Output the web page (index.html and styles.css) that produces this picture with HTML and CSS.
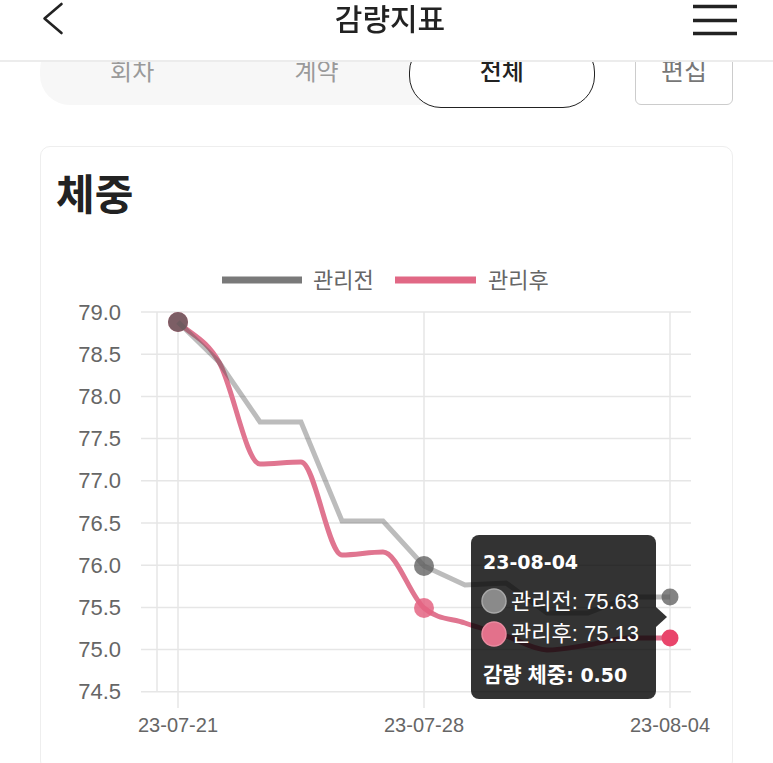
FILE: index.html
```html
<!DOCTYPE html>
<html lang="ko">
<head>
    <meta charset="UTF-8">
    <meta name="viewport" content="width=device-width, initial-scale=1.0">
    <title>감량지표</title>
    <link rel="stylesheet" href="styles.css">
</head>
<body>
    <header class="top-bar">
        <a class="back-btn" href="#">
            <svg width="30" height="40" viewBox="40 0 30 40">
                <polyline points="61.5,4 44.5,18.5 61.5,33" fill="none" stroke="#222" stroke-width="2.6" stroke-linecap="round" stroke-linejoin="round"/>
            </svg>
        </a>
        <h1 class="page-title">감량지표</h1>
        <a class="menu-btn" href="#">
            <svg width="50" height="40" viewBox="690 0 50 40">
                <line x1="693" y1="6.5" x2="737" y2="6.5" stroke="#222" stroke-width="3.4"/>
                <line x1="693" y1="20.5" x2="737" y2="20.5" stroke="#222" stroke-width="3.4"/>
                <line x1="693" y1="33.5" x2="737" y2="33.5" stroke="#222" stroke-width="3.4"/>
            </svg>
        </a>
    </header>

    <main class="content">
        <div class="tab-row">
            <div class="tabs">
                <button class="tab">회차</button>
                <button class="tab">계약</button>
                <button class="tab active">전체</button>
            </div>
            <button class="edit-btn">편집</button>
        </div>

        <section class="card">
            <h2 class="card-title">체중</h2>
            <svg class="chart" width="691" height="520" viewBox="41 250 691 520">
                <!-- legend -->
                <rect x="222" y="276.5" width="80" height="7" fill="rgba(88,88,88,0.8)"/>
                <text class="legend" x="313" y="288">관리전</text>
                <rect x="395" y="276.5" width="81" height="7" fill="rgba(222,88,120,0.9)"/>
                <text class="legend" x="488" y="288">관리후</text>

                <!-- grid -->
                <g stroke="#e6e6e6" stroke-width="1.5">
                    <line x1="141" y1="312" x2="691" y2="312"/>
                    <line x1="141" y1="354.2" x2="691" y2="354.2"/>
                    <line x1="141" y1="396.4" x2="691" y2="396.4"/>
                    <line x1="141" y1="438.6" x2="691" y2="438.6"/>
                    <line x1="141" y1="480.8" x2="691" y2="480.8"/>
                    <line x1="141" y1="523" x2="691" y2="523"/>
                    <line x1="141" y1="565.2" x2="691" y2="565.2"/>
                    <line x1="141" y1="607.4" x2="691" y2="607.4"/>
                    <line x1="141" y1="649.6" x2="691" y2="649.6"/>
                    <line x1="141" y1="691.8" x2="691" y2="691.8"/>
                    <line x1="157" y1="312" x2="157" y2="692"/>
                    <line x1="178" y1="312" x2="178" y2="708"/>
                    <line x1="424" y1="312" x2="424" y2="708"/>
                    <line x1="670" y1="312" x2="670" y2="708"/>
                </g>

                <!-- y axis -->
                <g class="tick" text-anchor="end">
                    <text x="121" y="319.5">79.0</text>
                    <text x="121" y="361.7">78.5</text>
                    <text x="121" y="403.9">78.0</text>
                    <text x="121" y="446.1">77.5</text>
                    <text x="121" y="488.3">77.0</text>
                    <text x="121" y="530.5">76.5</text>
                    <text x="121" y="572.7">76.0</text>
                    <text x="121" y="614.9">75.5</text>
                    <text x="121" y="657.1">75.0</text>
                    <text x="121" y="699.3">74.5</text>
                </g>

                <!-- x axis -->
                <g class="tick x-tick" text-anchor="middle">
                    <text x="178" y="732">23-07-21</text>
                    <text x="424" y="732">23-07-28</text>
                    <text x="670" y="732">23-08-04</text>
                </g>

                <!-- 관리후 (monotone curve) -->
                <path d="M178,322 C191.67,335.33 205.33,338.33 219,362 C232.67,385.67 246.33,464 260,464 C273.67,464 287.33,462 301,462 C314.67,462 328.33,555 342,555 C355.67,555 369.33,552 383,552 C396.67,552 410.33,596.17 424,608 C437.67,619.83 451.33,618.33 465,623 C478.67,627.67 492.33,631.5 506,636 C519.67,640.5 533.33,650 547,650 C560.67,650 574.33,647 588,645 C601.67,643 615.33,638 629,638 C642.67,638 656.33,638 670,638" fill="none" stroke="#e07590" stroke-width="5"/>
                <circle cx="178" cy="322" r="10" fill="#e4708b"/>
                <circle cx="424" cy="608" r="10" fill="rgba(228,100,130,0.85)"/>
                <circle cx="670" cy="638" r="8.5" fill="#e9456b"/>

                <!-- 관리전 -->
                <polyline points="178,322 219,362 260,422 301,422 342,521 383,521 424,566 465,585 506,583 547,613 588,613 629,597 670,597" fill="none" stroke="rgba(88,88,88,0.4)" stroke-width="5"/>
                <circle cx="178" cy="322" r="10" fill="rgba(88,88,88,0.74)"/>
                <circle cx="424" cy="566" r="10" fill="rgba(88,88,88,0.74)"/>
                <circle cx="670" cy="597" r="8.5" fill="rgba(88,88,88,0.74)"/>

                <!-- tooltip -->
                <g class="tooltip">
                    <rect x="471" y="535" width="185" height="164" rx="8" fill="rgba(0,0,0,0.8)"/>
                    <polygon points="656,607 667,617 656,627" fill="rgba(0,0,0,0.8)"/>
                    <text class="tip-title" x="483" y="569">23-08-04</text>
                    <circle cx="494" cy="601" r="12" fill="#8a8a8a" stroke="#a8a8a8" stroke-width="1.5"/>
                    <text class="tip-body" x="511" y="609">관리전: 75.63</text>
                    <circle cx="494" cy="634" r="12" fill="#e3718b" stroke="#e98a9f" stroke-width="1.5"/>
                    <text class="tip-body" x="511" y="641">관리후: 75.13</text>
                    <text class="tip-title" x="483" y="682"><tspan class="tip-ko">감량 체중</tspan>: 0.50</text>
                </g>
            </svg>
        </section>
    </main>
</body>
</html>
```

FILE: styles.css
```css
body {
    margin: 0;
    background: #fff;
    font-family: "Noto Sans CJK KR", sans-serif;
    color: #222;
}
.top-bar {
    position: fixed;
    top: 0;
    left: 0;
    right: 0;
    z-index: 10;
    height: 40px;
    padding: 0 33px 20px 40px;
    display: grid;
    grid-template-columns: 1fr auto 1fr;
    align-items: center;
    background: #fff;
    border-bottom: 2px solid #ececec;
}
.back-btn, .menu-btn {
    display: flex;
}
.menu-btn {
    justify-self: end;
}
.page-title {
    align-self: start;
    margin: 0;
    font-size: 30px;
    font-weight: 500;
    line-height: 34px;
}
.content {
    padding: 0 40px;
}
.tab-row {
    display: flex;
    justify-content: space-between;
    align-items: flex-start;
    padding-top: 40px;
}
.tabs {
    display: flex;
    width: 555px;
    height: 65px;
    background: #f7f7f7;
    border-radius: 30px;
}
.tab {
    flex: 1;
    height: 65px;
    border: none;
    background: none;
    font-family: inherit;
    font-size: 24px;
    color: #9a9a9a;
    padding: 0 0 7px;
}
.tab.active {
    height: 68px;
    background: #fff;
    border: 1.5px solid #222;
    border-radius: 32px;
    color: #222;
    font-weight: 500;
    padding-bottom: 10px;
}
.edit-btn {
    width: 98px;
    height: 65px;
    background: #fff;
    border: 1.5px solid #ccc;
    border-radius: 6px;
    font-family: inherit;
    font-size: 25px;
    color: #777;
    padding: 0 0 8px;
}
.card {
    margin-top: 41px;
    border: 1px solid #eee;
    border-radius: 10px;
}
.card-title {
    margin: 0;
    padding: 23px 15px 0;
    font-size: 42px;
    line-height: 44px;
    font-weight: 700;
    color: #222;
}
.chart {
    display: block;
    margin-top: 36px;
    font-family: "Liberation Sans", "Noto Sans CJK KR", sans-serif;
}
.legend {
    font-size: 22px;
    fill: #666;
}
.tick {
    font-size: 22px;
    fill: #666;
}
.x-tick {
    font-size: 20px;
}
.tip-title {
    font-family: "DejaVu Sans", "Noto Sans CJK KR", sans-serif;
    font-size: 19px;
    font-weight: 700;
    fill: #fff;
}
.tip-ko {
    font-family: "Noto Sans CJK KR", sans-serif;
    font-size: 21px;
}
.tip-body {
    font-size: 22px;
    fill: #fff;
}
```
